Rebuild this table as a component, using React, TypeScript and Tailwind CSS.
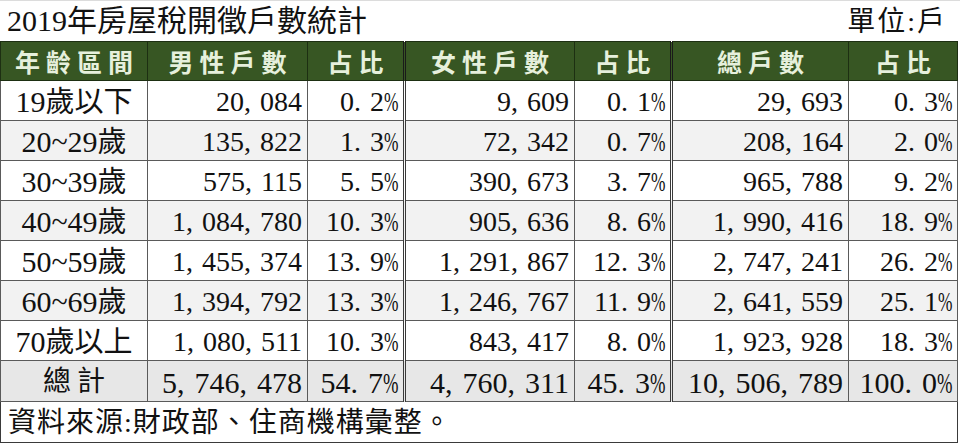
import { Fragment } from "react";

type Row = {
  label: string;
  male: string;
  maleRate: string;
  female: string;
  femaleRate: string;
  total: string;
  totalRate: string;
};

const rows: Row[] = [
  { label: "19歲以下", male: "20,084", maleRate: "0.2%", female: "9,609", femaleRate: "0.1%", total: "29,693", totalRate: "0.3%" },
  { label: "20~29歲", male: "135,822", maleRate: "1.3%", female: "72,342", femaleRate: "0.7%", total: "208,164", totalRate: "2.0%" },
  { label: "30~39歲", male: "575,115", maleRate: "5.5%", female: "390,673", femaleRate: "3.7%", total: "965,788", totalRate: "9.2%" },
  { label: "40~49歲", male: "1,084,780", maleRate: "10.3%", female: "905,636", femaleRate: "8.6%", total: "1,990,416", totalRate: "18.9%" },
  { label: "50~59歲", male: "1,455,374", maleRate: "13.9%", female: "1,291,867", femaleRate: "12.3%", total: "2,747,241", totalRate: "26.2%" },
  { label: "60~69歲", male: "1,394,792", maleRate: "13.3%", female: "1,246,767", femaleRate: "11.9%", total: "2,641,559", totalRate: "25.1%" },
  { label: "70歲以上", male: "1,080,511", maleRate: "10.3%", female: "843,417", femaleRate: "8.0%", total: "1,923,928", totalRate: "18.3%" },
];

const sum: Row = {
  label: "總計",
  male: "5,746,478",
  maleRate: "54.7%",
  female: "4,760,311",
  femaleRate: "45.3%",
  total: "10,506,789",
  totalRate: "100.0%",
};

function Figure({ text, big }: { text: string; big?: boolean }) {
  return (
    <>
      {text.split("").map((c, i) => {
        if (c === "," || c === ".")
          return (
            <span key={i} className={big ? "mr-[10px]" : "mr-[9px]"}>
              {c}
            </span>
          );
        if (c === "%")
          return (
            <span key={i} className={big ? "inline-block w-[15px] origin-left scale-x-[0.62]" : "inline-block w-[14px] origin-left scale-x-[0.62]"}>
              %
            </span>
          );
        return <Fragment key={i}>{c}</Fragment>;
      })}
    </>
  );
}

function Label({ text }: { text: string }) {
  return (
    <>
      {text.split("").map((c, i) =>
        /[0-9~]/.test(c) ? (
          <Fragment key={i}>{c}</Fragment>
        ) : (
          <span key={i} className="text-[29px]">{c}</span>
        )
      )}
    </>
  );
}

const head = ["年齡區間", "男性戶數", "占比", "女性戶數", "占比", "總戶數", "占比"];

export default function App() {
  const line = "border border-[#5a5a5a]";
  const dbl = "border-l-[3px] border-l-[#3a3a3a] border-double";

  const cells = (r: Row, big?: boolean) => [
    r.male,
    r.maleRate,
    r.female,
    r.femaleRate,
    r.total,
    r.totalRate,
  ].map((v, i) => (
    <td
      key={i}
      className={`${line} ${i === 2 || i === 4 ? dbl : ""} text-right pr-[5px] pt-[3px] ${big ? "text-[30px]" : "text-[28px]"}`}
    >
      <Figure text={v} big={big} />
    </td>
  ));

  return (
    <main className="w-[960px] h-[444px] bg-white overflow-hidden border-t border-[#dcdcdc] font-['Liberation_Serif','Noto_Sans_CJK_TC',serif] text-[#111]">
      <div className="w-[957px]">
        <div className="h-[40px] flex items-end justify-between pl-[7px] pr-[10px] pb-[2px]">
          <h1 className="text-[30px] leading-[36px]">2019年房屋稅開徵戶數統計</h1>
          <span className="text-[28px] leading-[34px] tracking-[2px]">單位:戶</span>
        </div>

        <table className="w-[957px] table-fixed border-collapse leading-none">
          <colgroup>
            <col className="w-[147px]" />
            <col className="w-[160px]" />
            <col className="w-[97px]" />
            <col className="w-[170px]" />
            <col className="w-[97px]" />
            <col className="w-[177px]" />
            <col className="w-[109px]" />
          </colgroup>
          <thead>
            <tr className="h-[39px] bg-[#375623]">
              {head.map((h, i) => (
                <th
                  key={i}
                  className={`border border-[#1d2f12] ${i === 3 || i === 5 ? "border-l-[3px] border-l-[#1a1a1a] border-double" : ""} font-['Noto_Sans_CJK_TC',sans-serif] font-bold text-[25px] tracking-[6px] text-[#e6f0dc] text-center`}
                >
                  <span className="-mr-[6px]">{h}</span>
                </th>
              ))}
            </tr>
          </thead>
          <tbody>
            {rows.map((r, ri) => (
              <tr key={ri} className={`h-[40px] ${ri % 2 === 1 ? "bg-[#f2f2f2]" : "bg-white"}`}>
                <td className={`${line} text-center text-[30px] pt-[2px]`}>
                  <Label text={r.label} />
                </td>
                {cells(r)}
              </tr>
            ))}
            <tr className="h-[41px] bg-[#e7e7e7]">
              <td className={`${line} text-center text-[28px] tracking-[6px] pt-[2px]`}>
                <span className="-mr-[6px]">{sum.label}</span>
              </td>
              {cells(sum, true)}
            </tr>
            <tr className="h-[41px]">
              <td colSpan={7} className="border border-[#3a3a3a] text-left pl-[7px] text-[28px] tracking-[1px] pt-[2px]">
                資料來源:財政部、住商機構彙整。
              </td>
            </tr>
          </tbody>
        </table>
      </div>
    </main>
  );
}
